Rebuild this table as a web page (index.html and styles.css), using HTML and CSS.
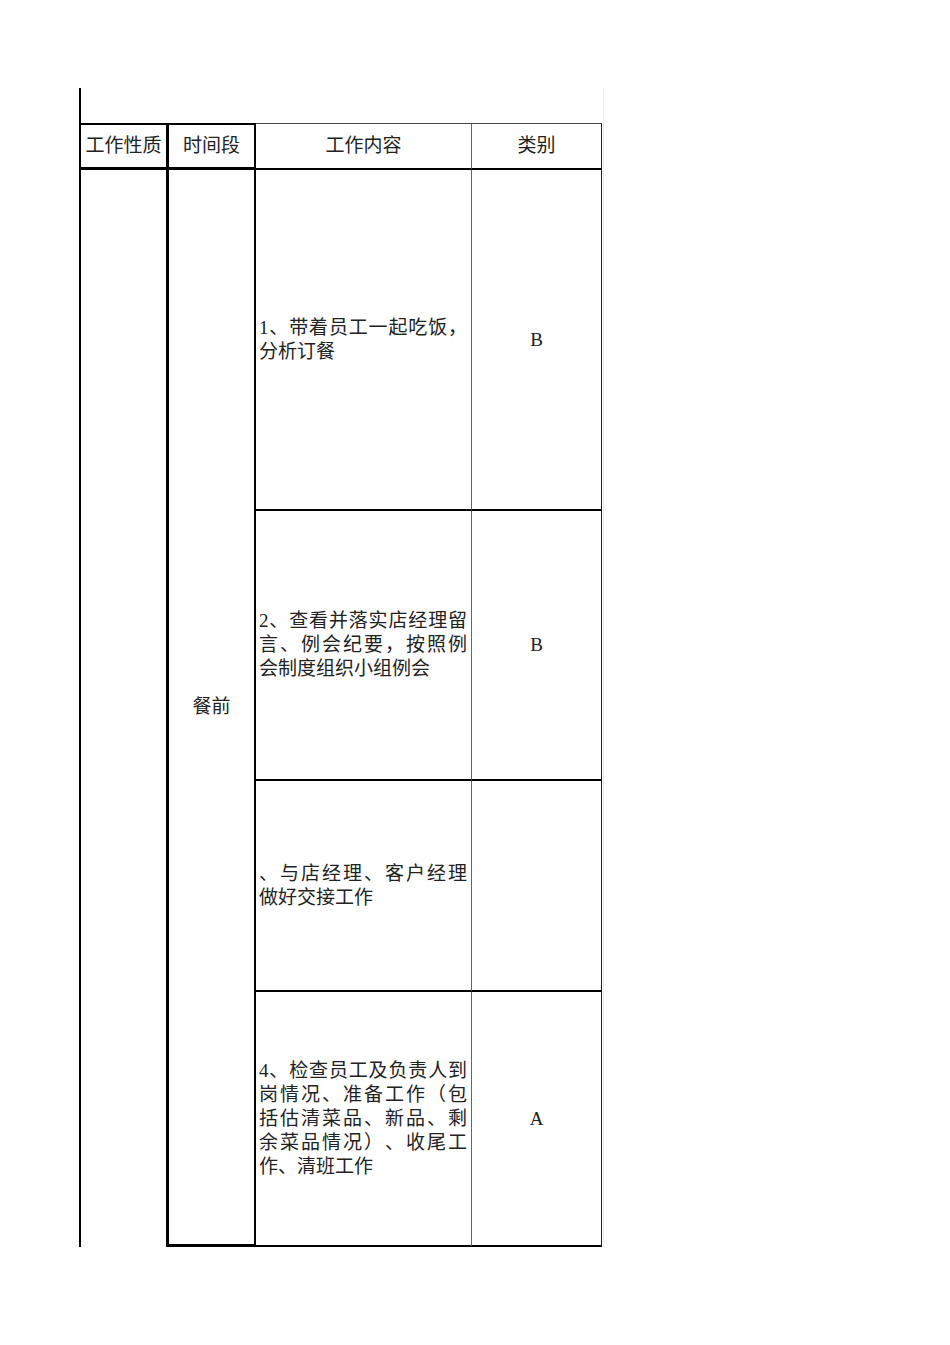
FILE: index.html
```html
<!DOCTYPE html>
<html lang="zh-CN">
<head>
<meta charset="utf-8">
<title>工作内容</title>
<link rel="stylesheet" href="styles.css">
</head>
<body>
<div class="page">
  <div class="sheet">
    <div class="grid">
      <div class="title-row"></div>

      <div class="cell head h1">工作性质</div>
      <div class="cell head h2">时间段</div>
      <div class="cell head h3">工作内容</div>
      <div class="cell head h4">类别</div>

      <div class="cell nature"></div>
      <div class="cell period">餐前</div>

      <div class="cell content"><p class="text">1、带着员工一起吃饭，分析订餐</p></div>
      <div class="cell grade">B</div>

      <div class="cell content"><p class="text">2、查看并落实店经理留言、例会纪要，按照例会制度组织小组例会</p></div>
      <div class="cell grade">B</div>

      <div class="cell content"><p class="text">、与店经理、客户经理做好交接工作</p></div>
      <div class="cell grade"></div>

      <div class="cell content"><p class="text">4、检查员工及负责人到岗情况、准备工作（包括估清菜品、新品、剩余菜品情况）、收尾工作、清班工作</p></div>
      <div class="cell grade">A</div>
    </div>
  </div>
</div>
</body>
</html>
```

FILE: styles.css
```css
* {
  box-sizing: border-box;
}

html,
body {
  margin: 0;
  background: #ffffff;
}

body {
  font-family: "Liberation Serif", "Noto Sans CJK SC", serif;
  font-size: 19px;
  line-height: 24px;
  color: #222222;
  text-spacing-trim: space-all;
  text-autospace: no-autospace;
}

.page {
  padding: 88px 0 0 79px;
}

.sheet {
  display: inline-block;
  border-right: 1px solid #ebebeb;
  padding-right: 1px;
}

.grid {
  display: grid;
  grid-template-columns: 90px 87px 216px 130px;
  grid-template-rows: 35px 47px 341px 270px 211px 255px;
}

.title-row {
  grid-column: 1 / -1;
  border-left: 2px solid #000000;
}

.cell {
  display: flex;
  align-items: center;
  justify-content: center;
  white-space: nowrap;
}

.head {
  border-bottom: 3px solid #000000;
}

.h1 {
  border-left: 2px solid #000000;
  border-top: 2px solid #000000;
  border-right: 3px solid #000000;
}

.h2 {
  border-top: 2px solid #000000;
  border-right: 2px solid #000000;
}

.h3 {
  border-top: 1px solid #444444;
  border-right: 1px solid #666666;
  border-bottom-width: 2px;
}

.h4 {
  border-top: 1px solid #444444;
  border-right: 1px solid #222222;
  border-bottom-width: 2px;
}

.nature {
  grid-column: 1;
  grid-row: 3 / span 4;
  border-left: 2px solid #000000;
  border-right: 3px solid #000000;
}

.period {
  grid-column: 2;
  grid-row: 3 / span 4;
  border-right: 2px solid #000000;
  border-bottom: 3px solid #000000;
}

.content {
  grid-column: 3;
  justify-content: flex-start;
  padding: 0 4px 0 3px;
  border-right: 1px solid #666666;
  border-bottom: 2px solid #000000;
  white-space: normal;
}

.grade {
  grid-column: 4;
  border-right: 1px solid #222222;
  border-bottom: 2px solid #000000;
}

.text {
  margin: 0;
  width: 100%;
  text-align: justify;
}
```
